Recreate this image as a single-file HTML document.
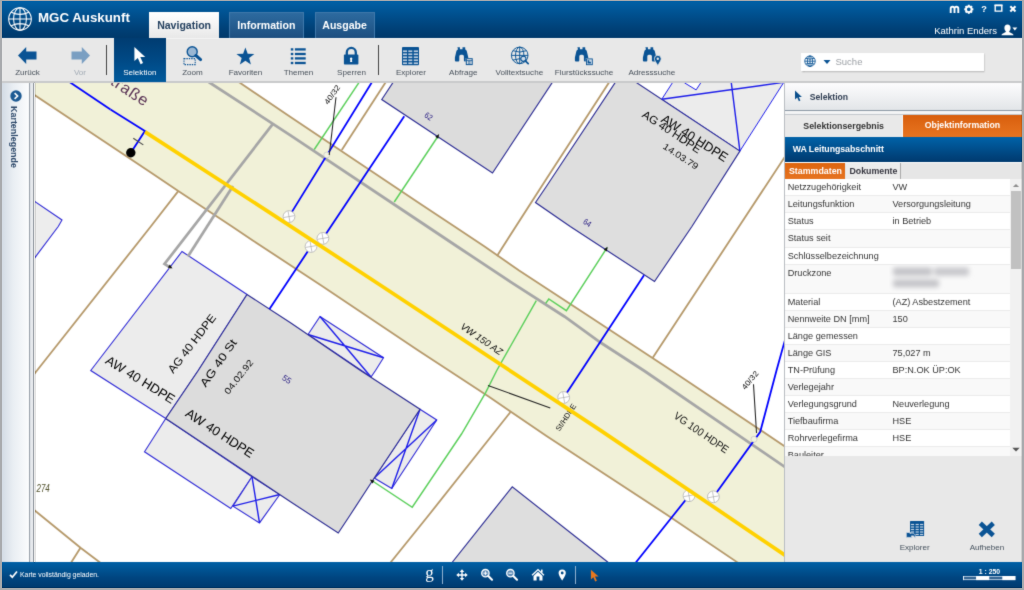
<!DOCTYPE html>
<html lang="de">
<head>
<meta charset="utf-8">
<title>MGC Auskunft</title>
<style>
*{box-sizing:border-box;margin:0;padding:0}
html,body{width:1024px;height:590px;overflow:hidden}
body{background:#a8aaad;font-family:"Liberation Sans",Arial,sans-serif;position:relative;-webkit-font-smoothing:antialiased}
.abs{position:absolute}
#app{position:absolute;left:1.5px;top:1px;width:1020.5px;height:586.5px;background:#e8e8e8;overflow:hidden}
/* everything inside uses page coordinates via #stage offset */
#stage{position:absolute;left:-1.5px;top:-1px;width:1024px;height:590px;filter:url(#soft)}
#header{position:absolute;left:0;top:0;width:1024px;height:38px;background:linear-gradient(#0061a7 0%,#005ca0 12%,#004b87 50%,#003e73 82%,#00396b 100%)}
#title{position:absolute;left:38px;top:10.1px;font-size:13.3px;font-weight:bold;color:#fff;white-space:nowrap;line-height:15px}
.tab{position:absolute;top:12px;height:26px;font-weight:bold;font-size:10.55px;line-height:26px;text-align:center;white-space:nowrap}
.tab.on{background:linear-gradient(#ffffff,#f4f4f4 50%,#e8e8e8);color:#24405f}
.tab.off{background:linear-gradient(#2d6a9f,#255d90 50%,#1d4f80);color:#fff;border:1px solid #3f78aa;border-bottom:none;line-height:24px}
#toolbar{position:absolute;left:0;top:38px;width:1024px;height:43.5px;background:#e8e8e8;border-top:1px solid #f3f3f3}
#tbline{position:absolute;left:0;top:81px;width:1024px;height:1.5px;background:#c9cacb}
.tb{position:absolute;top:38px;height:43.5px;text-align:center}
.tb span{position:absolute;left:-20px;right:-20px;top:30.3px;font-size:8.1px;line-height:10px;color:#47505a;white-space:nowrap}
.tb.sel{background:linear-gradient(#003c71,#004985 50%,#005a9c)}
.tb.sel span{color:#fff}
.tb svg{position:absolute}
.sep{position:absolute;top:45.2px;height:29.5px;width:1.1px;background:#444}
#search{position:absolute;left:801px;top:53px;width:182.5px;height:17.5px;background:#fff;box-shadow:0.5px 1px 1.5px rgba(0,0,0,.25)}
#search span{position:absolute;left:34.5px;top:3px;font-size:9.5px;line-height:11px;color:#9da1a6}
#user{position:absolute;left:934.2px;top:25.3px;font-size:9.5px;line-height:11px;color:#fff;white-space:nowrap}
#leftp{position:absolute;left:0;top:82.5px;width:28.7px;height:480px;background:linear-gradient(90deg,#cfd8e2,#e9eef3 45%,#fbfcfd)}
#leftsp{position:absolute;left:28.7px;top:82.5px;width:5.8px;height:480px;background:linear-gradient(90deg,#9aa2ab 0,#9aa2ab 1.3px,#dfe3e8 1.3px,#eef0f3 4.4px,#a9b0b8 4.4px,#a9b0b8 5.8px)}
#kl{position:absolute;left:9.2px;top:106.2px;transform-origin:0 0;transform:rotate(90deg) translate(0,-100%);font-size:8.93px;font-weight:bold;color:#2a4668;white-space:nowrap;line-height:10px}
#map{position:absolute;left:34.5px;top:82.5px;width:749.5px;height:479.5px;background:#fff;overflow:hidden}
#panel{position:absolute;left:784px;top:82.5px;width:238px;height:479.5px;background:#e8e8e8}
#status{position:absolute;left:0;top:562px;width:1024px;height:26px;background:linear-gradient(#0060a6 0%,#005595 25%,#004580 60%,#003a6e 100%)}
</style>
</head>
<body>
<svg width="0" height="0" style="position:absolute;left:0;top:0"><defs><filter id="soft" x="0" y="0" width="100%" height="100%" color-interpolation-filters="sRGB"><feConvolveMatrix order="3" kernelMatrix="1 6 1 6 44 6 1 6 1" divisor="72" edgeMode="duplicate" preserveAlpha="true"/></filter></defs></svg>
<div id="app"><div id="stage">

<div id="header">
  <svg class="abs" style="left:7px;top:5.5px" width="26" height="26" viewBox="0 0 26 26" fill="none" stroke="#fff" stroke-width="1.05">
    <circle cx="13" cy="13" r="11.3"/>
    <ellipse cx="13" cy="13" rx="6.4" ry="11.3"/>
    <path d="M13 1.7V24.3M1.7 13H24.3M4.2 6.2Q13 10.6 21.8 6.2M4.2 19.8Q13 15.4 21.8 19.8"/>
  </svg>
  <div id="title">MGC Auskunft</div>
  <div class="tab on" style="left:149.2px;width:69.8px">Navigation</div>
  <div class="tab off" style="left:229px;width:74.7px">Information</div>
  <div class="tab off" style="left:314.5px;width:60.2px">Ausgabe</div>
  <div id="user">Kathrin Enders</div>
<svg class="abs" style="left:948.8px;top:4.6px" width="11" height="9" viewBox="0 0 11 9"><path d="M1.7,7.9V3.7a1.9,1.9 0 0 1 3.8,0V7.9M5.5,3.7a1.9,1.9 0 0 1 3.8,0V7.9" fill="none" stroke="#fff" stroke-width="1.9"/></svg>
<svg class="abs" style="left:963.4px;top:3.5px" width="11" height="11" viewBox="0 0 11 11"><g transform="translate(5.8,5.3) scale(0.93)" fill="#fff"><circle r="3.0" fill="none" stroke="#fff" stroke-width="2.0"/><rect x="-1.05" y="-4.9" width="2.1" height="2.4" transform="rotate(0)"/><rect x="-1.05" y="-4.9" width="2.1" height="2.4" transform="rotate(45)"/><rect x="-1.05" y="-4.9" width="2.1" height="2.4" transform="rotate(90)"/><rect x="-1.05" y="-4.9" width="2.1" height="2.4" transform="rotate(135)"/><rect x="-1.05" y="-4.9" width="2.1" height="2.4" transform="rotate(180)"/><rect x="-1.05" y="-4.9" width="2.1" height="2.4" transform="rotate(225)"/><rect x="-1.05" y="-4.9" width="2.1" height="2.4" transform="rotate(270)"/><rect x="-1.05" y="-4.9" width="2.1" height="2.4" transform="rotate(315)"/></g></svg>
<div class="abs" style="left:981.3px;top:3.6px;font-size:9.2px;font-weight:bold;color:#fff;line-height:11px">?</div>
<svg class="abs" style="left:993.6px;top:3.9px" width="9" height="8.5" viewBox="0 0 9 8.5"><path d="M1.2,1.5h6.6v5.6h-6.6z" fill="none" stroke="#fff" stroke-width="1.4"/><path d="M0.5,1.2h8" stroke="#fff" stroke-width="1.4"/></svg>
<svg class="abs" style="left:1009px;top:4.7px" width="8" height="8" viewBox="0 0 8 8"><path d="M1.3,1.3L6.5,6.5M6.5,1.3L1.3,6.5" stroke="#fff" stroke-width="2.1" fill="none"/></svg>
<svg class="abs" style="left:1000.5px;top:23.9px" width="13" height="12" viewBox="0 0 13 12"><path d="M6.5,0.5c2,0 3.1,1.5 3.1,3.4c0,1.5 -0.7,2.8 -1.5,3.4c0.1,0.9 0.7,1.2 1.9,1.6c1.6,0.5 2.4,1.1 2.5,2.4h-12c0.1,-1.3 0.9,-1.9 2.5,-2.4c1.2,-0.4 1.8,-0.7 1.9,-1.6c-0.8,-0.6 -1.5,-1.9 -1.5,-3.4c0,-1.9 1.1,-3.4 3.1,-3.4z" fill="#fff"/></svg>
<svg class="abs" style="left:1012px;top:27.3px" width="6" height="4.5" viewBox="0 0 6 4.5"><path d="M0.4,0.5h4.9L2.85,3.6z" fill="#fff"/></svg>

</div>

<div id="toolbar"></div>
<div id="tbline"></div>

<div class="tb" style="left:1.5px;width:52px"><span>Zurück</span></div>
<div class="tb" style="left:54px;width:52px"><span style="color:#a2abb5">Vor</span></div>
<div class="sep" style="left:106.4px"></div>
<div class="tb sel" style="left:113.8px;width:52px"><span>Selektion</span></div>
<div class="tb" style="left:166.5px;width:52px"><span>Zoom</span></div>
<div class="tb" style="left:219.5px;width:52px"><span>Favoriten</span></div>
<div class="tb" style="left:272.5px;width:52px"><span>Themen</span></div>
<div class="tb" style="left:325.5px;width:52px"><span>Sperren</span></div>
<div class="sep" style="left:377.8px"></div>
<div class="tb" style="left:385px;width:52px"><span>Explorer</span></div>
<div class="tb" style="left:437.3px;width:52px"><span>Abfrage</span></div>
<div class="tb" style="left:493.3px;width:52px"><span>Volltextsuche</span></div>
<div class="tb" style="left:558px;width:52px"><span>Flurstückssuche</span></div>
<div class="tb" style="left:625.8px;width:52px"><span>Adresssuche</span></div>

<div id="search"><span>Suche</span></div>
<svg class="abs" style="left:17px;top:46px" width="21" height="19" viewBox="0 0 21 19"><path d="M1,9.5L9.2,1L9.2,5.6L19.5,5.6L19.5,13.4L9.2,13.4L9.2,18Z" fill="#0a5394"/></svg>
<svg class="abs" style="left:69.5px;top:46px" width="21" height="19" viewBox="0 0 21 19"><path d="M20,9.5L11.8,1L11.8,5.6L1.5,5.6L1.5,13.4L11.8,13.4L11.8,18Z" fill="#7a9fc2"/></svg>
<svg class="abs" style="left:133px;top:46px" width="14" height="20" viewBox="0 0 14 20"><path d="M1.4,1L1.4,15L4.8,11.9L7.6,18.2L10,17.1L7.3,11L12.2,11Z" fill="#fff"/></svg>
<svg class="abs" style="left:182px;top:45px" width="21" height="21" viewBox="0 0 21 21"><circle cx="10.2" cy="6.8" r="5" fill="#9ab7d3" stroke="#0a5394" stroke-width="1.4"/><path d="M13.9,10.5L18.6,14.6" stroke="#0a5394" stroke-width="3" stroke-linecap="round"/><rect x="2" y="13.6" width="11.2" height="6" fill="none" stroke="#0a5394" stroke-width="1.1" stroke-dasharray="1.4 1"/></svg>
<svg class="abs" style="left:236px;top:45.5px" width="19" height="20" viewBox="0 0 19 20"><polygon points="9.40,1.50 11.69,7.74 18.34,8.00 13.11,12.11 14.93,18.50 9.40,14.80 3.87,18.50 5.69,12.11 0.46,8.00 7.11,7.74" fill="#0a5394"/></svg>
<svg class="abs" style="left:290px;top:48px" width="17" height="17" viewBox="0 0 17 17"><g fill="#0a5394"><rect x="0.8" y="0.25" width="2.5" height="2.3"/><rect x="4.9" y="0.25" width="10.8" height="2.3"/><rect x="0.8" y="4.85" width="2.5" height="2.3"/><rect x="4.9" y="4.85" width="10.8" height="2.3"/><rect x="0.8" y="9.25" width="2.5" height="2.3"/><rect x="4.9" y="9.25" width="10.8" height="2.3"/><rect x="0.8" y="13.85" width="2.5" height="2.3"/><rect x="4.9" y="13.85" width="10.8" height="2.3"/></g></svg>
<svg class="abs" style="left:343px;top:46px" width="17" height="20" viewBox="0 0 17 20"><path d="M3.8,9V6.4a4.5,4.5 0 0 1 9,0V9" fill="none" stroke="#0a5394" stroke-width="2.3"/><rect x="0.9" y="8.6" width="14.5" height="10" rx="0.8" fill="#0a5394"/><path d="M8.15,11.6a1.2,1.2 0 0 1 0.7,2.2l0.4,2.3h-2.2l0.4,-2.3a1.2,1.2 0 0 1 0.7,-2.2z" fill="#fff"/></svg>
<svg class="abs" style="left:402px;top:46.8px" width="18" height="19" viewBox="0 0 18 19"><rect x="0" y="0" width="17" height="18.2" rx="0.9" fill="#0a5394"/><g fill="#b9cbde"><rect x="1.00" y="3.40" width="4.0" height="1.65"/><rect x="1.00" y="6.40" width="4.0" height="1.65"/><rect x="1.00" y="9.40" width="4.0" height="1.65"/><rect x="1.00" y="12.40" width="4.0" height="1.65"/><rect x="1.00" y="15.40" width="4.0" height="1.65"/><rect x="6.30" y="3.40" width="4.0" height="1.65"/><rect x="6.30" y="6.40" width="4.0" height="1.65"/><rect x="6.30" y="9.40" width="4.0" height="1.65"/><rect x="6.30" y="12.40" width="4.0" height="1.65"/><rect x="6.30" y="15.40" width="4.0" height="1.65"/><rect x="11.80" y="3.40" width="4.2" height="1.65"/><rect x="11.80" y="6.40" width="4.2" height="1.65"/><rect x="11.80" y="9.40" width="4.2" height="1.65"/><rect x="11.80" y="12.40" width="4.2" height="1.65"/><rect x="11.80" y="15.40" width="4.2" height="1.65"/></g></svg>
<svg class="abs" style="left:454px;top:46.5px" width="20" height="19" viewBox="0 0 20 19"><path d="M3.4,0.3h2.5v2h2.6v-2h2.7v2l1.5,1.4l1.6,6.8v3q0,1 -1,1h-2.4q-1,0 -1,-1v-4.2q0,-1.5 -1.5,-1.5h-1.6q-1.5,0 -1.5,1.5v4.2q0,1 -1,1h-2.4q-1,0 -1,-1v-3l1.6,-6.8l1.5,-1.4z" fill="#0a5394"/><rect x="11.7" y="11.1" width="7" height="7" fill="#e8e8e8"/><rect x="12.3" y="11.7" width="5.9" height="5.9" fill="none" stroke="#0a5394" stroke-width="1"/><path d="M12.3,13.6h5.9M13.9,14.8h2.7M13.9,16.2h2.7" stroke="#0a5394" stroke-width="0.8"/></svg>
<svg class="abs" style="left:510px;top:46px" width="20" height="20" viewBox="0 0 20 20"><g fill="none" stroke="#0a5394" stroke-width="0.95"><circle cx="9.7" cy="9.4" r="8.3"/><ellipse cx="9.7" cy="9.4" rx="4.2" ry="8.3"/><path d="M9.7,1.1v16.6M1.4,9.4h16.6M2.9,4.7q6.8,2.8 13.6,0M2.9,14.1q6.8,-2.8 13.6,0"/></g><circle cx="13.4" cy="12.8" r="2.6" fill="#cfdcea" stroke="#0a5394" stroke-width="1.1"/><path d="M15.3,14.8L18.2,17.6" stroke="#0a5394" stroke-width="1.7" stroke-linecap="round"/></svg>
<svg class="abs" style="left:574.4px;top:46.5px" width="20" height="19" viewBox="0 0 20 19"><path d="M3.4,0.3h2.5v2h2.6v-2h2.7v2l1.5,1.4l1.6,6.8v3q0,1 -1,1h-2.4q-1,0 -1,-1v-4.2q0,-1.5 -1.5,-1.5h-1.6q-1.5,0 -1.5,1.5v4.2q0,1 -1,1h-2.4q-1,0 -1,-1v-3l1.6,-6.8l1.5,-1.4z" fill="#0a5394"/><rect x="11.8" y="11.2" width="7.2" height="7.2" fill="#e8e8e8"/><rect x="12.5" y="11.9" width="5.8" height="5.8" fill="#cfdcea" stroke="#0a5394" stroke-width="0.9"/><path d="M13.6,13.2h1.6v1.5h1.7v1.8h-3.3z" fill="#0a5394"/></svg>
<svg class="abs" style="left:642px;top:46.5px" width="20" height="19" viewBox="0 0 20 19"><path d="M3.4,0.3h2.5v2h2.6v-2h2.7v2l1.5,1.4l1.6,6.8v3q0,1 -1,1h-2.4q-1,0 -1,-1v-4.2q0,-1.5 -1.5,-1.5h-1.6q-1.5,0 -1.5,1.5v4.2q0,1 -1,1h-2.4q-1,0 -1,-1v-3l1.6,-6.8l1.5,-1.4z" fill="#0a5394"/><path d="M15.8,8.3a3.4,3.4 0 0 1 3.4,3.4c0,2.2 -3.4,6.6 -3.4,6.6s-3.4,-4.4 -3.4,-6.6a3.4,3.4 0 0 1 3.4,-3.4z" fill="#0a5394" stroke="#e8e8e8" stroke-width="0.9"/><circle cx="15.8" cy="11.7" r="1.2" fill="#e8e8e8"/></svg>
<svg class="abs" style="left:803.8px;top:55.3px" width="12.2" height="12.2" viewBox="0 0 13 13"><g fill="none" stroke="#0a5394" stroke-width="0.9"><circle cx="6.4" cy="6.6" r="5.6"/><ellipse cx="6.4" cy="6.6" rx="2.8" ry="5.6"/><path d="M6.4,1v11.2M0.8,6.6h11.2M1.8,3.6q4.6,1.6 9.2,0M1.8,9.6q4.6,-1.6 9.2,0"/></g></svg>
<svg class="abs" style="left:823px;top:58.5px" width="8" height="6" viewBox="0 0 8 6"><path d="M0.5,0.9h7L4,4.9z" fill="#0a5394"/></svg>


<div id="leftp"></div>
<div id="leftsp"></div>
<svg id="klic" class="abs" style="left:9.6px;top:89.8px" width="12" height="12" viewBox="0 0 12 12"><circle cx="6" cy="6" r="5.7" fill="#1c5a93"/><path d="M4.6,3.1L7.6,6L4.6,8.9" fill="none" stroke="#fff" stroke-width="1.6"/></svg>
<div id="kl">Kartenlegende</div>

<div id="map">
<svg width="749.5" height="479.5" viewBox="34.5 82.5 749.5 479.5" style="position:absolute;left:0;top:0;display:block;filter:blur(0.2px)" font-family="'Liberation Sans',Arial,sans-serif">
<rect x="30" y="80" width="760" height="490" fill="#fff"/>
<!-- road -->
<polygon fill="#f1f1d8" points="30,78 233,78 239,82 290,116.5 420,203.5 454,226 483.7,245.7 518.6,270 588.9,316 671,370 790,449.7 790,566 743,566 737,561.9 666,514 546,435.5 488.1,396 448.4,370 417.8,350 321.9,285.7 252.3,240 231.5,226 177.75,190.6 150.3,172 34,94.6 30,92"/>
<!-- buildings -->
<g stroke-width="1" stroke-linejoin="miter">
<polygon fill="#ededed" stroke="#2f2ad6" stroke-width="1.1" points="57.75,226 30,263 30,190 34,200.75 61.5,219.5"/>
<polygon fill="#dcdcdc" stroke="#2c2c93" stroke-width="1.15" points="392.5,82 381.25,99 492,172.5 551.8,82 556,76 396,76"/>
<polygon fill="#ececec" stroke="#1e1eea" points="661.25,98.75 676,76 787,76 739.4,150.6"/>
<polygon fill="#dedede" stroke="#2c2c93" stroke-width="1.15" points="614.75,82 618.5,76 627,76 636.25,82.3 739.4,150.6 691.4,226 654,281 569.75,226 535,202 546,185.75"/>
<polygon fill="#fff" stroke="#1e1eea" points="683.9,82.3 695.6,89.4 700.3,82.3 704,76 680,76"/>
<path fill="none" stroke="#1e1eea" stroke-width="1.4" d="M661.25,98.75L783.1,81.9M739.4,150.6L730.8,82.3"/>
<!-- building 55 complex -->
<polygon fill="#ececec" stroke="#2f2ad6" stroke-width="1.1" points="181.5,251 246.5,294 197.75,370 165.25,418 90.25,370"/>
<polygon fill="#ececec" stroke="#2f2ad6" stroke-width="1.1" points="165.25,418 144,451.25 230.25,508 251.5,476.25"/>
<polygon fill="#ececec" stroke="#2f2ad6" stroke-width="1.1" points="251.5,476.25 232.4,505.6 259,522.4 279.3,494"/>
<path fill="none" stroke="#1e1eea" stroke-width="1.4" d="M251.5,476.25L259,522.4M232.4,505.6L279.3,494"/>
<polygon fill="#ececec" stroke="#2f2ad6" stroke-width="1.1" points="319.5,316 383,357.25 375,370 370.5,376.5 307.5,334"/>
<path fill="none" stroke="#1e1eea" stroke-width="1.4" d="M319.5,316L370.5,376.5M307.5,334L383,357.25"/>
<polygon fill="#ececec" stroke="#2f2ad6" stroke-width="1.1" points="419.5,408.75 436.25,419.5 391.25,488 373.75,477.5"/>
<path fill="none" stroke="#1e1eea" stroke-width="1.4" d="M419.5,408.75L391.25,488M436.25,419.5L373.75,477.5"/>
<polygon fill="#dcdcdc" stroke="#2c2c93" stroke-width="1.15" points="246.5,294 290,322.25 360,370 419.5,408.75 373.75,477.5 350,514 337.75,532.5 290,501.25 165.25,418 197.75,370"/>
<polygon fill="#dedede" stroke="#2c2c93" stroke-width="1.15" points="511.75,486.3 451.75,561.75 445,570 614,570 607.4,561.75"/>
</g>
<!-- parcel lines -->
<g fill="none" stroke="#b69a6c" stroke-width="1.85">
<path d="M30,92L34,94.6L150.3,172L177.75,190.6L231.5,226L252.3,240L321.9,285.7L417.8,350L448.4,370L488.1,396L546,435.5L666,514L737,561.9L743,566"/>
<path d="M233,78L239,82L290,116.5L420,203.5L454,226L483.7,245.7L518.6,270L588.9,316L671,370L790,449.7"/>
<path d="M177.75,190.6L150.25,226L36.5,370L30,378.2"/>
<path d="M388.9,76L341.25,149.5"/>
<path d="M612.4,76L546,178.25L496.5,255.4"/>
<path d="M790,147.8L738.5,226L652.25,357.3"/>
<path d="M510,411.5L428.75,514L390.25,561.75L384,569.5"/>
<path d="M30,506.5L35.5,511L80,547.3L99.5,562L106,566.9M80,547.3L67.5,567"/>
</g>
<!-- grey pipes -->
<g fill="none" stroke="#a6a6a6" stroke-width="2.75">
<path d="M200,76L209,82L290,134.8L420,221.5L456.7,246L510,281.3L563.9,316L600,342L644,370.5L790,470.3"/>
<path d="M272.2,123.6L164,263.5L170.6,267.6"/>
<path d="M232.5,185.5L187.4,256"/>
</g>
<!-- green -->
<g fill="none" stroke="#5bcf5b" stroke-width="1.45">
<path d="M362.5,76L313.75,149"/>
<path d="M437.5,135.75L393.75,201.5"/>
<path d="M606.5,247.25L565.9,310.2L548.3,298.5L545.2,302.8"/>
<path d="M535.8,300.1L496.25,370L485,392.3L461,433.5L411.75,506.75L371.25,480"/>
</g>
<!-- blue pipes -->
<g fill="none" stroke="#0000ff" stroke-width="1.8">
<path d="M110,109L144.4,130.6L130.3,152.3"/><path d="M62,76.8L110,109"/>
<path d="M375.2,76L371.25,82L288.5,216.1"/>
<path d="M403.75,115.75L322.4,237.9M310.5,246L269,308.5"/>
<path d="M643.5,274.75L581,370L563.2,397"/>
<path d="M790,320L784.75,338.5L776,370L759.75,431.25L713,496.25"/>
<path d="M688.5,495.2L673.5,514L635.5,561.75L629,570"/>
</g>
<!-- valves -->
<g fill="#fff" stroke="#b0b0b0" stroke-width="0.8">
<g transform="translate(288.5,216.1)"><circle r="5.9"/><path d="M-5.3,0.9L5.3,-0.9M-0.9,-5.3L0.9,5.3" stroke="#ababab" stroke-width="0.7"/></g>
<g transform="translate(322.4,237.9)"><circle r="5.9"/><path d="M-5.3,0.9L5.3,-0.9M-0.9,-5.3L0.9,5.3" stroke="#ababab" stroke-width="0.7"/></g>
<g transform="translate(310.5,246)"><circle r="5.9"/><path d="M-5.3,0.9L5.3,-0.9M-0.9,-5.3L0.9,5.3" stroke="#ababab" stroke-width="0.7"/></g>
<g transform="translate(563.2,397)"><circle r="5.9"/><path d="M-5.3,0.9L5.3,-0.9M-0.9,-5.3L0.9,5.3" stroke="#ababab" stroke-width="0.7"/></g>
<g transform="translate(688.5,495.2)"><circle r="5.9"/><path d="M-5.3,0.9L5.3,-0.9M-0.9,-5.3L0.9,5.3" stroke="#ababab" stroke-width="0.7"/></g>
<g transform="translate(712.9,496.3)"><circle r="5.9"/><path d="M-5.3,0.9L5.3,-0.9M-0.9,-5.3L0.9,5.3" stroke="#ababab" stroke-width="0.7"/></g>
<circle cx="326.25" cy="154.5" r="3" fill="#f3f3e2" stroke="#bdbdbd" stroke-width="0.6"/>
<circle cx="753.5" cy="438.75" r="3" fill="#f3f3e2" stroke="#bdbdbd" stroke-width="0.6"/>
</g>
<text transform="translate(565.2,416.9) rotate(-56.8)" text-anchor="middle" dy="0.36em" font-size="7.6" fill="#0a0a0a" textLength="31" lengthAdjust="spacingAndGlyphs">St/HDPE</text>
<!-- yellow main -->
<path fill="none" stroke="#ffd100" stroke-width="3.75" d="M144.5,131.4L270,212.6L380,284.7L600,429.9L784.4,554.6L790,558.4"/>
<!-- leader lines -->
<g fill="none" stroke="#222" stroke-width="1.05">
<path d="M335.5,96.8L328.75,154.5"/>
<path d="M753,383.75L756,432.5"/>
<path d="M487.5,385L549.75,407.5"/>
<path d="M132.8,137.8L142.8,144.4" stroke="#444" stroke-width="1.1"/>
</g>
<circle cx="130.3" cy="152.3" r="4.7" fill="#000"/>
<path transform="translate(438,134.6) rotate(-57)" d="M1.2,0L-3.2,-1.8L-3.2,1.8Z" fill="#111"/>
<path transform="translate(171,267.3) rotate(35)" d="M1.2,0L-3.2,-1.8L-3.2,1.8Z" fill="#111"/>
<path transform="translate(606.5,247.3) rotate(-57)" d="M1.2,0L-3.2,-1.8L-3.2,1.8Z" fill="#111"/>
<path transform="translate(370.3,479.6) rotate(215)" d="M1.2,0L-3.2,-1.8L-3.2,1.8Z" fill="#111"/>
<!-- labels -->
<g text-anchor="middle">
<text transform="translate(140,379) rotate(31.8)" dy="0.36em" font-size="12.9" fill="#000" textLength="78.8" lengthAdjust="spacingAndGlyphs">AW 40 HDPE</text>
<text transform="translate(191.2,343) rotate(-52.4)" dy="0.36em" font-size="11.3" fill="#000" textLength="71" lengthAdjust="spacingAndGlyphs">AG 40 HDPE</text>
<text transform="translate(217.7,362.3) rotate(-55)" dy="0.36em" font-size="11.3" fill="#000" textLength="55" lengthAdjust="spacingAndGlyphs">AG 40 St</text>
<text transform="translate(238.1,376.25) rotate(-52)" dy="0.36em" font-size="9" fill="#0a0a0a" textLength="41" lengthAdjust="spacingAndGlyphs">04.02.92</text>
<text transform="translate(219.4,432.5) rotate(33)" dy="0.36em" font-size="12.9" fill="#000" textLength="78.5" lengthAdjust="spacingAndGlyphs">AW 40 HDPE</text>
<text transform="translate(286.5,378.75) rotate(33)" dy="0.36em" font-size="8.3" fill="#2f2585" >55</text>
<text transform="translate(42.6,487.2) rotate(0)" dy="0.36em" font-size="10.6" fill="#4f4f2a" textLength="13.3" lengthAdjust="spacingAndGlyphs" font-style="italic">274</text>
<text transform="translate(671.3,131.1) rotate(33.3)" dy="0.36em" font-size="11.3" fill="#000" textLength="67.7" lengthAdjust="spacingAndGlyphs">AG 40 HDPE</text>
<text transform="translate(694.3,137.3) rotate(32.5)" dy="0.36em" font-size="12.9" fill="#000" textLength="76.3" lengthAdjust="spacingAndGlyphs">AW 40 HDPE</text>
<text transform="translate(680.4,155.75) rotate(33)" dy="0.36em" font-size="9" fill="#0a0a0a" textLength="40" lengthAdjust="spacingAndGlyphs">14.03.79</text>
<text transform="translate(428.25,115.75) rotate(33)" dy="0.36em" font-size="8.3" fill="#2f2585" textLength="8" lengthAdjust="spacingAndGlyphs">62</text>
<text transform="translate(587,222.2) rotate(33)" dy="0.36em" font-size="8.3" fill="#2f2585" textLength="8" lengthAdjust="spacingAndGlyphs">64</text>
<text transform="translate(331.6,94.1) rotate(-54.2)" dy="0.36em" font-size="7.6" fill="#0a0a0a" textLength="21.5" lengthAdjust="spacingAndGlyphs">40/32</text>
<text transform="translate(749.5,379.7) rotate(-50.4)" dy="0.36em" font-size="7.6" fill="#0a0a0a" textLength="21.5" lengthAdjust="spacingAndGlyphs">40/32</text>
<text transform="translate(481.25,338.5) rotate(34.5)" dy="0.36em" font-size="9.5" fill="#0a0a0a" textLength="48.5" lengthAdjust="spacingAndGlyphs" font-style="italic">VW 150 AZ</text>
<text transform="translate(701,431.9) rotate(34.6)" dy="0.36em" font-size="10.8" fill="#111" textLength="63.8" lengthAdjust="spacingAndGlyphs">VG 100 HDPE</text>
</g>
<text transform="translate(144.2,106.6) rotate(33.6)" text-anchor="end" font-size="16.2" fill="#5a3355" letter-spacing="0.9">traße</text>
</svg>

</div>

<div id="panel">
<style>
#panel .ph{position:absolute;left:1.2px;top:0;width:236.8px;height:27.5px;background:linear-gradient(#fcfcfd,#f1f2f4 45%,#e2e5e8)}
#panel .lb{position:absolute;left:0;top:0;width:1.2px;height:480px;background:#b9bdc2}
#panel .l1{position:absolute;left:1.2px;top:27.5px;width:236.8px;height:1px;background:#8d99a6}
#panel .l2{position:absolute;left:1.2px;top:28.5px;width:236.8px;height:3px;background:#f3f4f5}
#panel .l3{position:absolute;left:1.2px;top:31.5px;width:236.8px;height:0.8px;background:#c3c8cd}
#panel .t1{position:absolute;left:1.2px;top:32.3px;width:118px;height:22.1px;background:#e9e9e9;font-weight:bold;font-size:8.8px;line-height:22px;text-align:center;color:#333;border-right:1px solid #f8f8f8}
#panel .t2{position:absolute;left:119.25px;top:32.5px;width:118.4px;height:21.9px;background:linear-gradient(#d85e0d,#e06a17 50%,#e6731f);font-weight:bold;font-size:8.76px;line-height:21.8px;text-align:center;color:#fff}
#panel .bar{position:absolute;left:1.2px;top:54.4px;width:236.8px;height:25.4px;background:linear-gradient(#0062a8,#005494 35%,#00437c 75%,#003a6f);color:#fff;font-weight:bold;font-size:8.76px;line-height:10px}
#panel .bar b{position:absolute;left:7.5px;top:7.2px;white-space:nowrap;letter-spacing:-0.02px}
#panel .sub{position:absolute;left:1.2px;top:80.5px;width:236.8px;height:15.6px;background:#e6e6e6}
#panel .s1{position:absolute;left:1.2px;top:80.5px;width:60.3px;height:15.6px;background:linear-gradient(#dd650f,#e67320);color:#fff;font-weight:bold;font-size:8.83px;line-height:16.2px;padding-left:3.8px;white-space:nowrap}
#panel .s2{position:absolute;left:61.5px;top:80.5px;width:55.6px;height:15.6px;background:#ececec;border-right:1px solid #a9a9a9;color:#35353f;font-weight:bold;font-size:8.81px;line-height:16.2px;padding-left:4px;white-space:nowrap}
#panel .wl{position:absolute;left:1.2px;top:79.8px;width:236.8px;height:0.7px;background:#fff}
#tbl{position:absolute;left:1.2px;top:96.1px;width:224.8px;height:277.4px;background:#fff;overflow:hidden}
#tbl .r{position:absolute;left:0;width:224.8px;font-size:9.17px;color:#363636;white-space:nowrap}
#tbl .r.g{background:#f9f9f9}
#tbl .ln{position:absolute;left:0;width:224.8px;height:1px;background:#ebebeb}
#tbl .r i{position:absolute;left:2.5px;top:3.4px;font-style:normal;line-height:11px}
#tbl .r u{position:absolute;left:107.3px;top:3.4px;text-decoration:none;line-height:11px}
#sb{position:absolute;left:226px;top:96.1px;width:11.8px;height:277.4px;background:#f1f1f1}
#sb .th{position:absolute;left:1.3px;top:12.5px;width:9.5px;height:77.7px;background:#c1c1c1}
.pbl{position:absolute;font-size:8.06px;line-height:10px;color:#44505c;white-space:nowrap}
</style>
<div class="lb"></div><div class="ph"></div><div class="l1"></div><div class="l2"></div><div class="l3"></div>
<svg class="abs" style="left:9.5px;top:7.2px" width="10" height="12" viewBox="0 0 10 12"><path d="M1,0.6L1,9.6L3.2,7.5L4.9,11.3L6.4,10.6L4.8,6.9L7.9,6.9Z" fill="#0a4f8c"/></svg>
<div class="abs" style="left:25.75px;top:9.2px;font-size:8.64px;font-weight:bold;color:#2f3d52;line-height:10px;white-space:nowrap">Selektion</div>
<div class="t1">Selektionsergebnis</div><div class="t2">Objektinformation</div>
<div class="bar"><b>WA Leitungsabschnitt</b></div><div class="wl"></div>
<div class="sub"></div><div class="s1">Stammdaten</div><div class="s2">Dokumente</div>
<div id="tbl">
<div class="r" style="top:0.0px;height:16.7px"><i>Netzzugehörigkeit</i><u>VW</u></div>
<div class="r g" style="top:16.7px;height:17.1px"><i>Leitungsfunktion</i><u>Versorgungsleitung</u></div>
<div class="r" style="top:33.8px;height:17.4px"><i>Status</i><u>in Betrieb</u></div>
<div class="r g" style="top:51.2px;height:17.4px"><i>Status seit</i></div>
<div class="r" style="top:68.6px;height:17.1px"><i>Schlüsselbezeichnung</i></div>
<div class="r g" style="top:85.7px;height:28.9px"><i>Druckzone</i><svg class="abs" style="left:104px;top:0" width="100" height="28" viewBox="0 0 100 28"><defs><filter id="bl" x="-20%" y="-60%" width="140%" height="220%"><feGaussianBlur stdDeviation="2.4"/></filter></defs><g filter="url(#bl)" fill="#c3c3c7"><rect x="4" y="3.6" width="39" height="8.2" rx="2"/><rect x="45" y="3.6" width="35" height="8.2" rx="2" fill="#c8c8cc"/><rect x="4" y="15.4" width="46" height="7.8" rx="2"/></g></svg></div>
<div class="r" style="top:114.6px;height:17.1px"><i>Material</i><u>(AZ) Asbestzement</u></div>
<div class="r g" style="top:131.7px;height:17.0px"><i>Nennweite DN [mm]</i><u>150</u></div>
<div class="r" style="top:148.7px;height:17.1px"><i>Länge gemessen</i></div>
<div class="r g" style="top:165.8px;height:17.1px"><i>Länge GIS</i><u>75,027 m</u></div>
<div class="r" style="top:182.9px;height:17.1px"><i>TN-Prüfung</i><u>BP:N.OK ÜP:OK</u></div>
<div class="r g" style="top:200.0px;height:17.0px"><i>Verlegejahr</i></div>
<div class="r" style="top:217.0px;height:17.1px"><i>Verlegungsgrund</i><u>Neuverlegung</u></div>
<div class="r g" style="top:234.1px;height:17.1px"><i>Tiefbaufirma</i><u>HSE</u></div>
<div class="r" style="top:251.2px;height:17.1px"><i>Rohrverlegefirma</i><u>HSE</u></div>
<div class="r g" style="top:268.3px;height:17.1px"><i>Bauleiter</i></div>
<div class="ln" style="top:16.25px"></div>
<div class="ln" style="top:33.35px"></div>
<div class="ln" style="top:50.75px"></div>
<div class="ln" style="top:68.15px"></div>
<div class="ln" style="top:85.25px"></div>
<div class="ln" style="top:114.15px"></div>
<div class="ln" style="top:131.25px"></div>
<div class="ln" style="top:148.25px"></div>
<div class="ln" style="top:165.35px"></div>
<div class="ln" style="top:182.45px"></div>
<div class="ln" style="top:199.55px"></div>
<div class="ln" style="top:216.55px"></div>
<div class="ln" style="top:233.65px"></div>
<div class="ln" style="top:250.75px"></div>
<div class="ln" style="top:267.85px"></div>
<div class="ln" style="top:284.95px"></div>
</div>
<div id="sb"><div class="th"></div>
<svg class="abs" style="left:2.2px;top:4.5px" width="8" height="5" viewBox="0 0 8 5"><path d="M0.9,4.1L4,1L7.1,4.1Z" fill="#8d8d8d"/></svg>
<svg class="abs" style="left:2.2px;top:268.5px" width="8" height="5" viewBox="0 0 8 5"><path d="M0.3,0.8L4,4.4L7.7,0.8Z" fill="#555"/></svg>
</div>
<!-- explorer btn -->
<svg class="abs" style="left:122px;top:438.3px" width="20" height="19" viewBox="0 0 20 19">
<g transform="translate(4,0)"><rect x="0" y="0" width="14.1" height="15" rx="0.6" fill="#0a5394"/><g fill="#c3d2e3"><rect x="0.90" y="2.90" width="3.2" height="1.2"/><rect x="0.90" y="5.40" width="3.2" height="1.2"/><rect x="0.90" y="7.90" width="3.2" height="1.2"/><rect x="0.90" y="10.40" width="3.2" height="1.2"/><rect x="0.90" y="12.90" width="3.2" height="1.2"/><rect x="5.60" y="2.90" width="3.2" height="1.2"/><rect x="5.60" y="5.40" width="3.2" height="1.2"/><rect x="5.60" y="7.90" width="3.2" height="1.2"/><rect x="5.60" y="10.40" width="3.2" height="1.2"/><rect x="5.60" y="12.90" width="3.2" height="1.2"/><rect x="10.00" y="2.90" width="3.2" height="1.2"/><rect x="10.00" y="5.40" width="3.2" height="1.2"/><rect x="10.00" y="7.90" width="3.2" height="1.2"/><rect x="10.00" y="10.40" width="3.2" height="1.2"/><rect x="10.00" y="12.90" width="3.2" height="1.2"/></g></g>
<path d="M0.3,11.5L4.9,11.5L3.9,12.6C7.6,11.2 10,13.2 9.3,17.3C8.4,14.9 6.9,14.3 5.3,14.9L6.3,16.4L0.3,16.4Z" fill="#0a5394" stroke="#dfe4ea" stroke-width="0.7"/>
</svg>
<div class="pbl" style="left:115.7px;top:460.3px">Explorer</div>
<svg class="abs" style="left:194px;top:438.6px" width="18" height="17" viewBox="0 0 18 17"><path d="M2.3,2.3L15.3,14.5M15.3,2.3L2.3,14.5" stroke="#0a5394" stroke-width="4.6" fill="none"/></svg>
<div class="pbl" style="left:185.7px;top:460.3px">Aufheben</div>

</div>

<div id="status">
<svg class="abs" style="left:8.5px;top:8.3px" width="9" height="9" viewBox="0 0 9 9"><path d="M1,4.8L3.3,7.2L8,1.5" fill="none" stroke="#fff" stroke-width="1.7"/></svg>
<div class="abs" style="left:20px;top:8.2px;font-size:6.86px;line-height:9px;color:#fff;white-space:nowrap">Karte vollständig geladen.</div>
<div class="abs" style="left:978.8px;top:5.2px;font-size:6.83px;font-weight:bold;line-height:9px;color:#fff;white-space:nowrap">1 : 250</div>
<svg class="abs" style="left:962.7px;top:14.4px" width="53" height="5" viewBox="0 0 53 5"><rect x="0" y="0" width="52.4" height="4.1" fill="#a3bdd6"/><rect x="0" y="0" width="0.8" height="4.1" fill="#fff"/><rect x="13.1" y="0" width="13.1" height="4.1" fill="#fff"/><rect x="39.3" y="0" width="13.1" height="4.1" fill="#fff"/><path d="M1,2.05h12M26.4,2.05h12.8" stroke="#0c477d" stroke-width="1.6"/></svg>
<div class="abs" style="left:425.3px;top:1.2000000000000455px;font-family:'Liberation Serif',serif;font-size:17px;line-height:19px;color:#fff">g</div>
<div class="abs" style="left:442px;top:3.7999999999999545px;width:1px;height:18.6px;background:#8fb0cf"></div>
<div class="abs" style="left:575.4px;top:3.7999999999999545px;width:1px;height:18.6px;background:#8fb0cf"></div>
<svg class="abs" style="left:455.6px;top:7.2000000000000455px" width="12" height="12" viewBox="0 0 12 12"><path d="M6,0.3L8.3,2.9H6.7V5.3H9.1V3.7L11.7,6L9.1,8.3V6.7H6.7V9.1H8.3L6,11.7L3.7,9.1H5.3V6.7H2.9V8.3L0.3,6L2.9,3.7V5.3H5.3V2.9H3.7Z" fill="#fff"/></svg>
<svg class="abs" style="left:480px;top:6px" width="14" height="14" viewBox="0 0 14 14"><circle cx="5.4" cy="5.2" r="3.7" fill="#5f8db8" stroke="#fff" stroke-width="1.3"/><path d="M3.5,5.2h3.8M5.4,3.3v3.8" stroke="#fff" stroke-width="1"/><path d="M8.3,8.1L12,11.7" stroke="#fff" stroke-width="2.1" stroke-linecap="round"/></svg>
<svg class="abs" style="left:505px;top:6px" width="14" height="14" viewBox="0 0 14 14"><circle cx="5.4" cy="5.2" r="3.7" fill="#5f8db8" stroke="#fff" stroke-width="1.3"/><path d="M3.5,5.2h3.8" stroke="#fff" stroke-width="1"/><path d="M8.3,8.1L12,11.7" stroke="#fff" stroke-width="2.1" stroke-linecap="round"/></svg>
<svg class="abs" style="left:531px;top:6px" width="14" height="13" viewBox="0 0 14 13"><path d="M7,0.8L13.4,6.8L12.5,7.7L7,2.6L1.5,7.7L0.6,6.8Z" fill="#fff"/><path d="M7,3.8L11.5,8V12.4H8.4V8.6H5.6V12.4H2.5V8Z" fill="#fff"/><rect x="10" y="1.6" width="1.6" height="3" fill="#fff"/></svg>
<svg class="abs" style="left:558.4px;top:6.7999999999999545px" width="8.4" height="12.4" viewBox="0 0 8.4 12.4"><path d="M4.2,0.5a3.6,3.6 0 0 1 3.6,3.6c0,2.6 -3.6,7.6 -3.6,7.6s-3.6,-5 -3.6,-7.6a3.6,3.6 0 0 1 3.6,-3.6z" fill="#fff"/><circle cx="4.2" cy="4" r="1.4" fill="#004a86"/></svg>
<svg class="abs" style="left:589.6px;top:6.600000000000023px" width="10" height="13.4" viewBox="0 0 10 13.4"><path d="M0.9,0.8L0.9,10.4L3.3,8.3L5.2,12.6L6.9,11.8L5,7.6L8.6,7.6Z" fill="#e8781f"/></svg>


</div>

</div></div>
</body>
</html>
